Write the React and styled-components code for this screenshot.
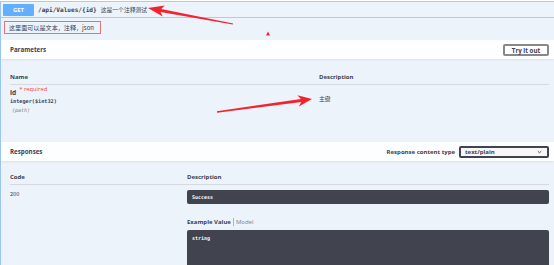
import React from 'react';
import styled, { createGlobalStyle } from 'styled-components';

const GlobalStyle = createGlobalStyle`
    body {
        margin: 0;
        background: #fff;
        font-family: "Open Sans", "Noto Sans CJK SC", sans-serif;
        color: #3b4151;
    }
`;

const Opblock = styled.div`
    position: relative;
    box-sizing: border-box;
    width: 554px;
    height: 264px;
    margin-top: 1px;
    overflow: hidden;
    background: #ecf3fb;
    border-left: 1px solid #9cc6f2;
    border-top: 1px solid #a9cdf2;
`;

const Summary = styled.div`
    display: flex;
    align-items: center;
    gap: 4px;
    height: 15px;
    padding: 0 2px;
    border-bottom: 1px solid #a9cdf2;
`;

const Method = styled.div`
    display: flex;
    align-items: center;
    justify-content: center;
    width: 31px;
    height: 12px;
    border-radius: 1px;
    background: #61affe;
    color: #fff;
    font-size: 6px;
    font-weight: 700;
`;

const Path = styled.span`
    font-family: "DejaVu Sans Mono", monospace;
    font-size: 6.1px;
    font-weight: 700;
    color: #3b4151;
`;

const SummaryText = styled.span`
    font-family: "Noto Sans CJK SC", sans-serif;
    font-size: 5.8px;
    color: #3b4151;
`;

const DescWrap = styled.div`
    display: flex;
    padding: 3px 3px 0;
`;

const Note = styled.div`
    display: flex;
    align-items: center;
    box-sizing: border-box;
    width: 97px;
    height: 13px;
    padding: 0 4px;
    border: 1px solid #e57373;
    font-family: "Noto Sans CJK SC", sans-serif;
    font-size: 6.1px;
    color: #3b4151;
`;

const SectionBar = styled.div`
    display: flex;
    align-items: center;
    justify-content: space-between;
    height: 19px;
    margin-top: ${p => p.$top || 0}px;
    padding: 0 5px 0 9px;
    background: #fdfeff;
    box-shadow: 0 1px 2px rgba(0, 0, 0, 0.08);
`;

const SectionTitle = styled.div`
    font-size: 6.2px;
    font-weight: 700;
    color: #3b4151;
`;

const TryButton = styled.button`
    box-sizing: border-box;
    width: 46px;
    height: 12px;
    padding: 0;
    border: 2px solid #888;
    border-radius: 2px;
    background: transparent;
    font-family: "Open Sans", sans-serif;
    font-size: 6.2px;
    font-weight: 700;
    color: #3b4151;
`;

const Table = styled.div`
    padding: ${p => p.$top}px 5px 0 9px;
    height: ${p => p.$height}px;
    box-sizing: border-box;
`;

const HeadRow = styled.div`
    display: grid;
    grid-template-columns: ${p => p.$cols};
    align-items: center;
    height: 15px;
    border-bottom: 1px solid #d5dae2;
`;

const HeadCell = styled.div`
    font-size: 6px;
    font-weight: 700;
    color: #3b4151;
`;

const Row = styled.div`
    display: grid;
    grid-template-columns: ${p => p.$cols};
    padding-top: ${p => p.$top}px;
`;

const ParamName = styled.div`
    display: flex;
    align-items: flex-start;
    font-size: 6.6px;
    font-weight: 700;
    line-height: 9px;
`;

const Required = styled.span`
    margin-left: 3px;
    margin-top: -3px;
    font-size: 5.8px;
    font-weight: 400;
    color: #f93e3e;
`;

const ParamType = styled.div`
    font-family: "DejaVu Sans Mono", monospace;
    font-size: 5.2px;
    font-weight: 700;
    line-height: 9px;
    color: #3b4151;
`;

const ParamIn = styled.div`
    margin-left: 2px;
    font-family: "DejaVu Sans Mono", monospace;
    font-size: 5px;
    font-style: italic;
    line-height: 8px;
    color: #808080;
`;

const CellText = styled.div`
    padding-top: ${p => p.$top || 0}px;
    font-family: "Noto Sans CJK SC", sans-serif;
    font-size: ${p => p.$size || 5.8}px;
    color: #3b4151;
`;

const ContentType = styled.div`
    display: flex;
    align-items: center;
    gap: 4px;
`;

const Label = styled.span`
    font-size: 6px;
    font-weight: 700;
    color: #3b4151;
`;

const Select = styled.div`
    display: flex;
    align-items: center;
    justify-content: space-between;
    box-sizing: border-box;
    width: 90px;
    height: 12px;
    padding: 0 5px 0 4px;
    border: 2px solid #41444e;
    border-radius: 2px;
    background: #f7f7f7;
    font-size: 6px;
    font-weight: 700;
    color: #3b4151;
`;

const CodeBox = styled.div`
    box-sizing: border-box;
    height: ${p => p.$height}px;
    padding: ${p => p.$pad}px 5px 0;
    border-radius: 2px;
    background: #41444e;
    font-family: "DejaVu Sans Mono", monospace;
    font-size: 5px;
    font-weight: 700;
    line-height: 8px;
    color: #fff;
`;

const ExampleTabs = styled.div`
    display: flex;
    align-items: center;
    margin: 14px 0 4px;
    font-size: 6px;
    line-height: 8px;
`;

const Tab = styled.span`
    font-weight: ${p => (p.$active ? 700 : 400)};
    color: ${p => (p.$active ? '#3b4151' : '#7a7f8a')};
    padding: 0 2px;
    &:first-child {
        padding-left: 0;
        border-right: 1px solid #b0b4bc;
    }
`;

const Marks = styled.svg`
    position: absolute;
    left: -1px;
    top: -2px;
    pointer-events: none;
`;

const Chevron = () => (
    <svg width="5" height="4" viewBox="0 0 5 4">
        <path d="M0.8 1.2 L2.5 2.8 L4.2 1.2" fill="none" stroke="#3b4151" strokeWidth="0.9" />
    </svg>
);

const PARAM_COLS = '309px 1fr';
const RESP_COLS = '177px 1fr';

export default function App() {
    return (
        <>
            <GlobalStyle />
            <Opblock>
                <Summary>
                    <Method>GET</Method>
                    <Path>/api/Values/{'{id}'}</Path>
                    <SummaryText>这是一个注释测试</SummaryText>
                </Summary>
                <DescWrap>
                    <Note>这里面可以是文本，注释，json</Note>
                </DescWrap>

                <SectionBar $top={6}>
                    <SectionTitle>Parameters</SectionTitle>
                    <TryButton>Try it out</TryButton>
                </SectionBar>
                <Table $top={10} $height={83}>
                    <HeadRow $cols={PARAM_COLS}>
                        <HeadCell>Name</HeadCell>
                        <HeadCell>Description</HeadCell>
                    </HeadRow>
                    <Row $cols={PARAM_COLS} $top={3}>
                        <div>
                            <ParamName>id<Required>* required</Required></ParamName>
                            <ParamType>integer($int32)</ParamType>
                            <ParamIn>(path)</ParamIn>
                        </div>
                        <CellText $top={6}>主键</CellText>
                    </Row>
                </Table>

                <SectionBar>
                    <SectionTitle>Responses</SectionTitle>
                    <ContentType>
                        <Label>Response content type</Label>
                        <Select>
                            <span>text/plain</span>
                            <Chevron />
                        </Select>
                    </ContentType>
                </SectionBar>
                <Table $top={8} $height={104}>
                    <HeadRow $cols={RESP_COLS}>
                        <HeadCell>Code</HeadCell>
                        <HeadCell>Description</HeadCell>
                    </HeadRow>
                    <Row $cols={RESP_COLS} $top={5}>
                        <CellText $size={5.6}>200</CellText>
                        <div>
                            <CodeBox $height={14} $pad={3}>Success</CodeBox>
                            <ExampleTabs>
                                <Tab $active>Example Value</Tab>
                                <Tab>Model</Tab>
                            </ExampleTabs>
                            <CodeBox $height={45} $pad={4}>string</CodeBox>
                        </div>
                    </Row>
                </Table>

                <Marks width="554" height="265" viewBox="0 0 554 265">
                    <polygon
                        fill="#f5222d"
                        points="148,8 164.7,5.4 161.2,8.9 233.1,23.4 232.9,24.6 160.5,11.9 162.7,16.5"
                    />
                    <polygon
                        fill="#f5222d"
                        points="312,99 297.4,95.3 300.9,99 216.9,111.3 217.1,112.7 301.3,102.1 298.8,106.5"
                    />
                    <polygon fill="#f5222d" points="266,35.5 270,35.5 268,31.5" />
                </Marks>
            </Opblock>
        </>
    );
}
